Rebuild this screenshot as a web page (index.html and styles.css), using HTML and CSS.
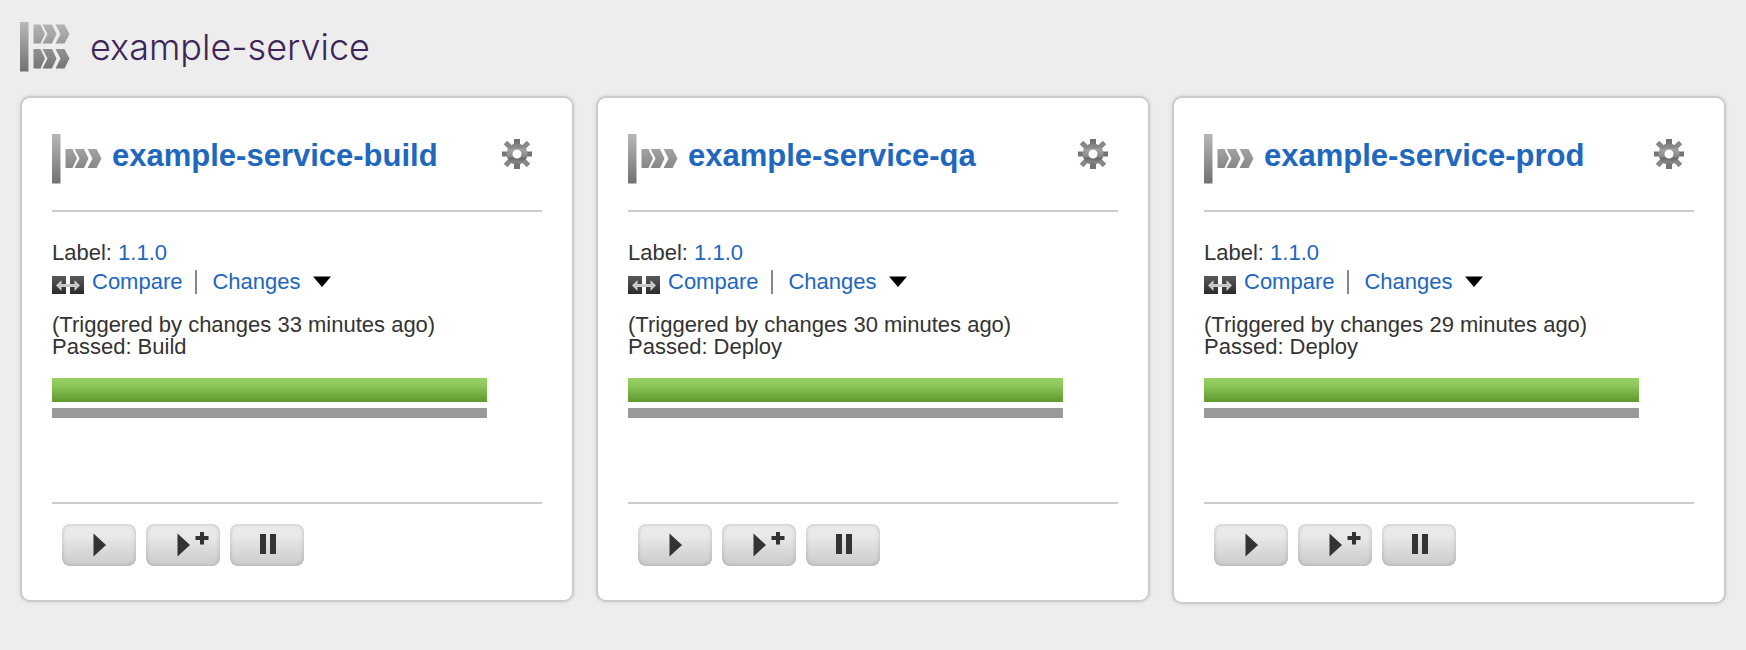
FILE: index.html
```
<!DOCTYPE html>
<html lang="en">
<head>
<meta charset="utf-8">
<title>example-service</title>
<link rel="stylesheet" href="styles.css">
</head>
<body>
<svg class="defs" width="0" height="0" aria-hidden="true">
  <defs>
    <linearGradient id="steel" gradientUnits="userSpaceOnUse" x1="0" y1="0" x2="0" y2="50">
      <stop offset="0" stop-color="#b8b8b8"/><stop offset="1" stop-color="#707070"/>
    </linearGradient>
    <linearGradient id="dark" x1="0" y1="0" x2="0" y2="1">
      <stop offset="0" stop-color="#5a5a5a"/><stop offset="1" stop-color="#2b2b2b"/>
    </linearGradient>
    <linearGradient id="gearfill" x1="0" y1="0" x2="0" y2="1">
      <stop offset="0" stop-color="#858585"/><stop offset="0.25" stop-color="#a0a0a0"/><stop offset="0.65" stop-color="#8a8a8a"/><stop offset="0.8" stop-color="#6c6c6c"/><stop offset="1" stop-color="#808080"/>
    </linearGradient>
    <symbol id="group" viewBox="0 0 50 50">
      <g fill="url(#steel)">
        <path d="M0 0h8.500v49.500H0z"/>
        <path d="M13.500 2.500h7l4.500 9.500-4.500 9.500h-7zM22.500 2.500h9.500l4.500 9.500-4.500 9.500h-9.500l5-9.500zM35.500 2.500h9l5 9.500-5 9.500h-9l5-9.500z"/>
        <path d="M13.500 27h7l4.500 9.500-4.500 10h-7zM22.500 27h9.500l4.500 9.500-4.500 10h-9.500l5-10zM35.500 27h9l5 9.500-5 10h-9l5-10z"/>
      </g>
    </symbol>
    <symbol id="pipeline" viewBox="0 0 50 50">
      <g fill="url(#steel)">
        <path d="M0 0h8.500v49.500H0z"/>
        <path d="M13.500 15h7l4.500 9.500-4.500 9.500h-7zM22.500 15h9.500l4.500 9.500-4.500 9.500h-9.500l5-9.500zM35.500 15h9l5 9.500-5 9.500h-9l5-9.500z"/>
      </g>
    </symbol>
    <symbol id="gear" viewBox="0 0 30 30">
      <g fill="none" stroke="#888" stroke-width="5">
        <path d="M3.500 3.500l5 5M21.500 21.500l5 5M26.500 3.500l-5 5M8.500 21.500l-5 5"/>
      </g>
      <g fill="none" stroke="#747474" stroke-width="6">
        <path d="M15 0v6M15 24v6"/>
      </g>
      <path fill="none" stroke="#747474" stroke-width="5" d="M0 15h6M24 15h6"/>
      <circle cx="15" cy="15" r="7.500" fill="none" stroke="url(#gearfill)" stroke-width="6"/>
    </symbol>
    <symbol id="compare" viewBox="0 0 32 18">
      <path fill="url(#dark)" d="M0 0h14v18H0zM18 0h14v18H18z"/>
      <path fill="#c9c9c9" d="M4 9.500L9.500 4v4H14v3H9.500v4zM28 9.500L22.500 4v4H14v3h8.500v4z"/>
    </symbol>
    <symbol id="caret" viewBox="0 0 20 12"><path d="M1 .5h18L10 11z"/></symbol>
    <symbol id="play" viewBox="0 0 74 42"><path fill="#333" d="M31.500 9.500L44 21 31.500 32.500z"/></symbol>
    <symbol id="playplus" viewBox="0 0 74 42"><path fill="#333" d="M31.500 9.500L44 21 31.500 32.500zM54 8h4v4h4.500v4H58v4.500h-4V16h-4.500v-4H54z"/></symbol>
    <symbol id="pause" viewBox="0 0 74 42"><path fill="#333" d="M30 10h6v20h-6zM40 10h6v20h-6z"/></symbol>
  </defs>
</svg>

<header class="group-header">
  <svg class="pipe-icon" aria-hidden="true"><use href="#group"/></svg>
  <h1 class="group-name">example-service</h1>
</header>

<main class="pipelines">
  <article class="card">
    <header class="card-head">
      <svg class="pipe-icon" aria-hidden="true"><use href="#pipeline"/></svg>
      <h2 class="card-title"><a href="#build">example-service-build</a></h2>
      <a class="settings" href="#settings" aria-label="Settings"><svg class="gear"><use href="#gear"/></svg></a>
    </header>
    <section class="instance">
      <p class="label">Label: <a href="#label">1.1.0</a></p>
      <div class="links">
        <a class="compare" href="#compare"><svg class="compare-icon" aria-hidden="true"><use href="#compare"/></svg>Compare</a>
        <a class="changes" href="#changes">Changes<svg class="caret" aria-hidden="true"><use href="#caret"/></svg></a>
      </div>
      <p class="status">(Triggered by changes 33 minutes ago)<br>Passed: Build</p>
      <a class="stage" href="#stage" aria-label="Build passed"></a>
      <div class="stage-base"></div>
    </section>
    <footer class="actions">
      <button class="btn" type="button" aria-label="Trigger"><svg class="btn-icon"><use href="#play"/></svg></button>
      <button class="btn" type="button" aria-label="Trigger with options"><svg class="btn-icon"><use href="#playplus"/></svg></button>
      <button class="btn" type="button" aria-label="Pause"><svg class="btn-icon"><use href="#pause"/></svg></button>
    </footer>
  </article>

  <article class="card">
    <header class="card-head">
      <svg class="pipe-icon" aria-hidden="true"><use href="#pipeline"/></svg>
      <h2 class="card-title"><a href="#qa">example-service-qa</a></h2>
      <a class="settings" href="#settings" aria-label="Settings"><svg class="gear"><use href="#gear"/></svg></a>
    </header>
    <section class="instance">
      <p class="label">Label: <a href="#label">1.1.0</a></p>
      <div class="links">
        <a class="compare" href="#compare"><svg class="compare-icon" aria-hidden="true"><use href="#compare"/></svg>Compare</a>
        <a class="changes" href="#changes">Changes<svg class="caret" aria-hidden="true"><use href="#caret"/></svg></a>
      </div>
      <p class="status">(Triggered by changes 30 minutes ago)<br>Passed: Deploy</p>
      <a class="stage" href="#stage" aria-label="Deploy passed"></a>
      <div class="stage-base"></div>
    </section>
    <footer class="actions">
      <button class="btn" type="button" aria-label="Trigger"><svg class="btn-icon"><use href="#play"/></svg></button>
      <button class="btn" type="button" aria-label="Trigger with options"><svg class="btn-icon"><use href="#playplus"/></svg></button>
      <button class="btn" type="button" aria-label="Pause"><svg class="btn-icon"><use href="#pause"/></svg></button>
    </footer>
  </article>

  <article class="card card-last">
    <header class="card-head">
      <svg class="pipe-icon" aria-hidden="true"><use href="#pipeline"/></svg>
      <h2 class="card-title"><a href="#prod">example-service-prod</a></h2>
      <a class="settings" href="#settings" aria-label="Settings"><svg class="gear"><use href="#gear"/></svg></a>
    </header>
    <section class="instance">
      <p class="label">Label: <a href="#label">1.1.0</a></p>
      <div class="links">
        <a class="compare" href="#compare"><svg class="compare-icon" aria-hidden="true"><use href="#compare"/></svg>Compare</a>
        <a class="changes" href="#changes">Changes<svg class="caret" aria-hidden="true"><use href="#caret"/></svg></a>
      </div>
      <p class="status">(Triggered by changes 29 minutes ago)<br>Passed: Deploy</p>
      <a class="stage" href="#stage" aria-label="Deploy passed"></a>
      <div class="stage-base"></div>
    </section>
    <footer class="actions">
      <button class="btn" type="button" aria-label="Trigger"><svg class="btn-icon"><use href="#play"/></svg></button>
      <button class="btn" type="button" aria-label="Trigger with options"><svg class="btn-icon"><use href="#playplus"/></svg></button>
      <button class="btn" type="button" aria-label="Pause"><svg class="btn-icon"><use href="#pause"/></svg></button>
    </footer>
  </article>
</main>
</body>
</html>
```

FILE: styles.css
```
* { box-sizing: border-box; }

body {
  margin: 0;
  padding: 22px 20px;
  background: #ededed;
  color: #333;
  font: 22px/22px "Liberation Sans", Arial, sans-serif;
}

h1, h2, p { margin: 0; }

a { color: #2067bd; text-decoration: none; }

svg { display: block; flex: none; }

.defs { position: absolute; }

.group-header {
  display: flex;
  gap: 20px;
  height: 50px;
  margin-bottom: 24px;
}

.group-name {
  color: #3d2657;
  font: 300 36px/50px "Inter", "Liberation Sans", sans-serif;
}

.pipe-icon { width: 50px; height: 50px; }

.pipelines {
  display: grid;
  grid-template-columns: repeat(3, minmax(0, 1fr));
  gap: 22px;
  align-items: start;
}

.card {
  padding: 36px 30px 34px;
  border: 2px solid #cbcbcb;
  border-radius: 10px;
  background: #fff;
  box-shadow: 0 0 4px rgba(0, 0, 0, 0.1);
}

.card-last { padding-bottom: 36px; }

.card-head {
  display: flex;
  gap: 10px;
  height: 78px;
  border-bottom: 2px solid #cbcbcb;
}

.card-title {
  flex: 1;
  font-size: 31px;
  line-height: 44px;
}

.settings { padding: 5px 10px 0 0; }

.gear { width: 30px; height: 30px; }

.instance {
  height: 292px;
  padding-top: 30px;
  border-bottom: 2px solid #cbcbcb;
}

.links {
  display: flex;
  align-items: center;
  height: 24px;
  margin: 6px 0 20px;
}

.compare, .changes {
  display: flex;
  align-items: center;
  height: 24px;
}

.compare {
  gap: 8px;
  padding-right: 13px;
  border-right: 2px solid #888;
}

.changes { gap: 11px; padding-left: 15px; }

.compare-icon { width: 32px; height: 18px; margin-top: 6px; }

.caret { width: 20px; height: 12px; }

.status { margin-bottom: 20px; }

.stage {
  display: block;
  width: 435px;
  max-width: 100%;
  height: 24px;
  margin-bottom: 6px;
  background: linear-gradient(#97d263, #8cc85a 30%, #659f32 90%, #609a2c);
}

.stage-base {
  width: 435px;
  max-width: 100%;
  height: 10px;
  background: #999;
}

.actions {
  display: flex;
  gap: 10px;
  padding: 20px 10px 0;
}

.btn {
  width: 74px;
  height: 42px;
  padding: 0;
  border: 0;
  border-radius: 8px;
  background: linear-gradient(#ebebeb, #e8e8e8 30%, #d2d2d2 80%, #cecece);
  box-shadow: inset 0 0 4px rgba(0, 0, 0, 0.2);
}

.btn-icon { width: 74px; height: 42px; }
```
